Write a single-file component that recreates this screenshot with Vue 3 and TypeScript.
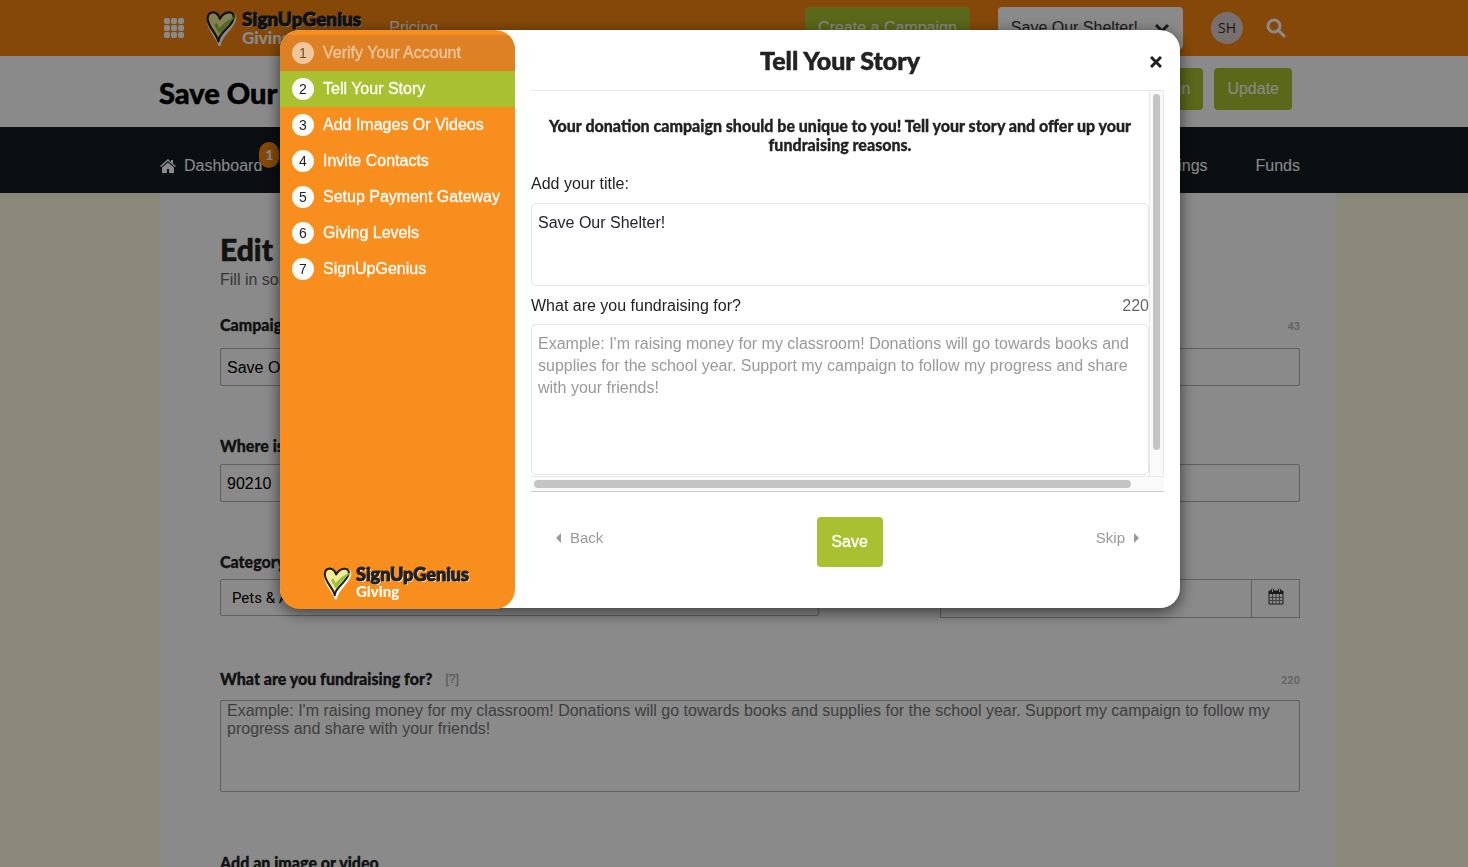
<script setup lang="ts">
import { ref } from 'vue'

interface Step {
  id: number
  label: string
}

const steps: Step[] = [
  { id: 1, label: 'Verify Your Account' },
  { id: 2, label: 'Tell Your Story' },
  { id: 3, label: 'Add Images Or Videos' },
  { id: 4, label: 'Invite Contacts' },
  { id: 5, label: 'Setup Payment Gateway' },
  { id: 6, label: 'Giving Levels' },
  { id: 7, label: 'SignUpGenius' },
]

const current = ref(2)
const title = ref('Save Our Shelter!')
const story = ref('')
const zip = ref('90210')
const date = ref('')
const example =
  "Example: I'm raising money for my classroom! Donations will go towards books and supplies for the school year. Support my campaign to follow my progress and share with your friends!"
</script>

<template>
  <div class="page">
    <svg class="defs" aria-hidden="true">
      <symbol id="heart" viewBox="0 0 32 36">
        <path d="M13 34C12 28 2 19 2 10C2 3 11 2 14 10C18 3 28 2 28 8C28 17 14 24 13 34Z" fill="#fff" stroke="#fff" stroke-width="3" stroke-linejoin="round" />
        <path d="M12 31C11 24 1 16 1.500 8.500C2 1 11 0.500 13.500 9C17 2 27 0.500 27 7C27 16 12 22 12 31Z" fill="#f2ec9a" stroke="#231f20" stroke-width="2.200" stroke-linejoin="round" />
        <path d="M8 15L10.500 13L13 18Q20 9 31 6Q21 13 14.500 23H12.500Z" fill="#9ac03c" />
      </symbol>
    </svg>

    <header class="top">
      <button class="grid-btn" type="button" aria-label="Apps">
        <svg width="20" height="20" viewBox="0 0 20 20">
          <template v-for="r in 3" :key="r">
            <rect v-for="c in 3" :key="c" :x="(c - 1) * 7" :y="(r - 1) * 7" width="6" height="6" rx="2" fill="#fff" />
          </template>
        </svg>
      </button>
      <a class="logo" href="#">
        <svg class="heart"><use href="#heart" /></svg>
        <span class="words"><b>SignUpGenius</b><i>Giving</i></span>
      </a>
      <a class="pricing" href="#">Pricing</a>
      <button class="btn create" type="button">Create a Campaign</button>
      <button class="picker" type="button">
        Save Our Shelter!
        <svg width="16" height="10" viewBox="0 0 16 10"><path d="M2 2L8 8L14 2" fill="none" stroke="#333" stroke-width="3" /></svg>
      </button>
      <span class="avatar">SH</span>
      <button class="search" type="button" aria-label="Search">
        <svg width="20" height="20" viewBox="0 0 20 20"><circle cx="8" cy="8" r="6" fill="none" stroke="#fff" stroke-width="3" /><path d="M12 12L18 18" stroke="#fff" stroke-width="3" stroke-linecap="round" /></svg>
      </button>
    </header>

    <div class="titlebar">
      <h1>Save Our Shelter!</h1>
      <button class="btn" type="button">View Campaign</button>
      <button class="btn" type="button">Update</button>
    </div>

    <nav class="nav">
      <a class="home" href="#">
        <svg width="16" height="14" viewBox="0 0 16 14">
          <path d="M0 7L8 0L11 3V1H13V5L16 7L15 8L8 2L1 8Z" fill="#fff" />
          <path d="M2 8.500L8 3.500L14 8.500V14H9V10H7V14H2Z" fill="#fff" />
        </svg>
        Dashboard<span class="badge">1</span>
      </a>
      <a class="push" href="#">Settings</a>
      <a href="#">Funds</a>
    </nav>

    <main class="panel">
      <h2>Edit Campaign</h2>
      <p class="sub">Fill in some details</p>

      <div class="label-row first"><label for="c-title">Campaign Title</label><small>43</small></div>
      <input id="c-title" v-model="title" class="field" type="text" />

      <div class="label-row where"><label for="c-zip">Where is it?</label></div>
      <input id="c-zip" v-model="zip" class="field" type="text" />

      <div class="split">
        <div>
          <div class="label-row"><label for="c-cat">Category</label></div>
          <select id="c-cat" class="field category"><option>Pets &amp; Animals</option></select>
        </div>
        <div>
          <div class="label-row"><label for="c-date">End Date</label></div>
          <div class="date">
            <input id="c-date" v-model="date" class="field" type="text" />
            <button type="button" aria-label="Open calendar">
              <svg width="16" height="17" viewBox="0 0 16 17">
                <path d="M1 3H15V16H1Z" fill="none" stroke="#333" />
                <path d="M1 3H15V6H1Z" fill="#333" />
                <path d="M1 9.5H15M1 12.5H15M4.5 6V16M8 6V16M11.5 6V16" stroke="#777" />
                <path d="M4.5 2V4M11.5 2V4" stroke="#333" stroke-width="3" stroke-linecap="round" />
                <path d="M4.5 1V4M11.5 1V4" stroke="#fff" />
              </svg>
            </button>
          </div>
        </div>
      </div>

      <div class="label-row what">
        <label for="c-what">What are you fundraising for?</label><a class="help" href="#">[?]</a><small>220</small>
      </div>
      <textarea id="c-what" v-model="story" class="field area" :placeholder="example"></textarea>
      <div class="label-row media"><strong>Add an image or video</strong></div>
    </main>

    <div class="backdrop">
      <section class="modal" role="dialog" aria-modal="true" aria-labelledby="m-title">
        <aside class="steps">
          <ol>
            <li v-for="s in steps" :key="s.id" :class="{ done: s.id < current, active: s.id === current }">
              <button type="button" @click="current = s.id"><span>{{ s.id }}</span>{{ s.label }}</button>
            </li>
          </ol>
          <a class="logo small" href="#">
            <svg class="heart"><use href="#heart" /></svg>
            <span class="words"><b>SignUpGenius</b><i>Giving</i></span>
          </a>
        </aside>

        <div class="body">
          <div class="head">
            <h2 id="m-title">Tell Your Story</h2>
            <button class="close" type="button" aria-label="Close">
              <svg width="12" height="12" viewBox="0 0 12 12"><path d="M1 1L11 11M11 1L1 11" stroke="#222" stroke-width="3" /></svg>
            </button>
          </div>

          <div class="scroller">
            <div class="content">
              <p class="intro">Your donation campaign should be unique to you! Tell your story and offer up your fundraising reasons.</p>
              <label for="m-name">Add your title:</label>
              <textarea id="m-name" v-model="title" class="name"></textarea>
              <div class="row"><label for="m-story">What are you fundraising for?</label><span>220</span></div>
              <textarea id="m-story" v-model="story" class="story" :placeholder="example"></textarea>
            </div>
            <div class="track-v"><div></div></div>
            <div class="track-h"><div></div></div>
          </div>

          <footer>
            <button class="link" type="button">
              <svg width="5" height="10" viewBox="0 0 5 10"><path d="M5 0V10L0 5Z" fill="#999" /></svg>Back
            </button>
            <button class="save" type="button">Save</button>
            <button class="link" type="button">
              Skip<svg width="5" height="10" viewBox="0 0 5 10"><path d="M0 0V10L5 5Z" fill="#999" /></svg>
            </button>
          </footer>
        </div>
      </section>
    </div>
  </div>
</template>

<style>
body {
  margin: 0;
}
</style>

<style scoped>
* {
  box-sizing: border-box;
}
.page {
  height: 100vh;
  overflow: hidden;
  background: #fffbdf;
  font: 16px/20px "Liberation Sans", Arial, sans-serif;
  color: #222;
}
.defs {
  position: absolute;
  width: 0;
  height: 0;
}
button,
input,
textarea,
select {
  font: inherit;
  color: inherit;
}
button {
  border: 0;
  padding: 0;
  background: none;
}
a {
  color: inherit;
  text-decoration: none;
}
h1,
h2,
p,
ol {
  margin: 0;
  padding: 0;
}
h1,
h2 {
  font-family: Lato, sans-serif;
  font-weight: 900;
  -webkit-text-stroke: 0.5px;
}
.top {
  display: flex;
  align-items: center;
  height: 56px;
  padding: 0 182px 0 164px;
  background: #f58610;
  color: #fff;
}
.grid-btn,
.search {
  display: flex;
}
.logo {
  display: flex;
  gap: 3px;
  margin-left: 22px;
}
.heart {
  width: 33px;
  height: 38px;
}
.words {
  display: flex;
  flex-direction: column;
}
.words b {
  font: 900 19px/20px Lato, sans-serif;
  color: #231f20;
  text-shadow: 1px 1px 0 #fff;
  -webkit-text-stroke: 1px;
}
.words i {
  font: 900 17px/18px Lato, sans-serif;
  color: #fff;
}
.pricing {
  margin-left: 28px;
}
.btn {
  height: 42px;
  padding: 0 13px;
  border-radius: 4px;
  background: #a9c030;
  color: #fff;
}
.create {
  margin-left: auto;
}
.picker {
  display: flex;
  align-items: center;
  gap: 16px;
  height: 42px;
  margin: 0 28px;
  padding: 0 13px;
  border-radius: 4px;
  background: #fff;
  color: #333;
}
.avatar {
  width: 32px;
  height: 32px;
  margin-right: 23px;
  border-radius: 50%;
  background: #ddd0cd;
  color: #333;
  font: 14px/32px "Open Sans", sans-serif;
  text-align: center;
}
.titlebar {
  display: flex;
  align-items: center;
  gap: 11px;
  height: 71px;
  padding: 0 176px 6px 159px;
  background: #fff;
}
.titlebar h1 {
  margin-right: auto;
  padding-top: 8px;
  font-size: 29px;
  line-height: 36px;
  color: #000;
}
.nav {
  display: flex;
  align-items: center;
  gap: 48px;
  height: 66px;
  padding: 12px 168px 0 160px;
  background: #141c21;
  color: #fff;
}
.home {
  position: relative;
  display: flex;
  align-items: center;
  gap: 8px;
}
.badge {
  position: absolute;
  top: -14px;
  right: -17px;
  width: 20px;
  border-radius: 10px;
  background: #f58610;
  font: 900 14px/26px Lato, sans-serif;
  text-align: center;
}
.push {
  margin-left: auto;
}
.panel {
  height: 700px;
  margin: 0 132px 0 160px;
  padding: 35px 36px 0 60px;
  background: #fff;
}
.panel h2 {
  font-size: 30px;
  line-height: 42px;
}
.sub {
  padding-bottom: 23px;
  line-height: 20px;
  color: #666;
}
.label-row {
  display: flex;
  align-items: center;
  height: 24px;
  font: 900 16px/24px Lato, sans-serif;
  -webkit-text-stroke: 0.3px;
}
.label-row small {
  margin-left: auto;
  padding-top: 3px;
  font: 700 11px/20px Roboto, sans-serif;
  color: #bbb;
  -webkit-text-stroke: 0;
}
.help {
  margin-left: 13px;
  font: 12px/20px "Liberation Sans", sans-serif;
  color: #aaa;
}
.field {
  display: block;
  width: 100%;
  height: 38px;
  padding: 2px 6px 0;
  border: 1px solid #a9b3b3;
  border-radius: 2px;
  background: #fff;
  color: #000;
}
.first {
  margin-bottom: 11px;
}
.where {
  margin: 48px 0 6px;
}
.split {
  display: grid;
  grid-template-columns: 599px 1fr;
  gap: 121px;
  padding-top: 48px;
}
.category {
  height: 37px;
  margin-top: 5px;
  padding: 0 11px;
  appearance: none;
  font: 15px/20px Roboto, sans-serif;
}
.date {
  display: flex;
  margin-top: 5px;
}
.date .field,
.date button {
  height: 39px;
  border-radius: 0;
}
.date button {
  flex: 0 0 48px;
  border: 1px solid #a9b3b3;
  border-left: 0;
}
.what {
  margin: 49px 0 9px;
}
.area {
  height: 92px;
  padding: 1px 6px;
  line-height: 18px;
  resize: none;
}
.area::placeholder {
  color: #757575;
}
.media {
  margin-top: 59px;
}
.backdrop {
  position: fixed;
  inset: 0;
  display: flex;
  justify-content: center;
  align-items: flex-start;
  padding: 30px 8px 0 0;
  background: rgba(0, 0, 0, 0.46);
}
.modal {
  display: flex;
  width: 900px;
  max-width: 100%;
  border-radius: 20px;
  background: #fff;
  box-shadow: 0 4px 16px rgba(0, 0, 0, 0.6);
}
.steps {
  display: flex;
  flex-direction: column;
  flex: 0 0 235px;
  margin-bottom: -1px;
  padding: 5px 0 8px;
  overflow: hidden;
  border-radius: 20px;
  background: #f88e1d;
  color: #fff;
}
.steps ol {
  list-style: none;
}
.steps li button {
  display: flex;
  align-items: center;
  gap: 9px;
  width: 100%;
  height: 36px;
  padding: 0 12px;
  -webkit-text-stroke: 0.3px;
}
.steps li span {
  width: 22px;
  height: 22px;
  border-radius: 50%;
  background: #fff;
  color: #222;
  font-size: 14px;
  line-height: 22px;
  -webkit-text-stroke: 0;
}
.steps .done {
  background: #de8024;
}
.steps .done button {
  opacity: 0.55;
}
.steps .active {
  background: #a9c030;
}
.small {
  gap: 2px;
  margin: auto 0 0 43px;
  padding-bottom: 1px;
}
.small .heart {
  width: 31px;
  height: 34px;
}
.small .words b {
  font-size: 18px;
  line-height: 17px;
}
.small .words i {
  font-size: 15px;
  line-height: 17px;
}
.body {
  flex: 1;
  min-width: 0;
  padding: 0 16px;
}
.head {
  position: relative;
  height: 60px;
  text-align: center;
}
.head h2 {
  padding-right: 15px;
  font-size: 25px;
  line-height: 60px;
}
.close {
  position: absolute;
  top: 26px;
  right: 2px;
  display: flex;
}
.scroller {
  display: grid;
  grid-template: 385px 15px / 1fr 15px;
  border-top: 1px solid #e6e6e6;
  border-bottom: 1px solid #ccc;
}
.content {
  padding-top: 25px;
}
.intro {
  padding-bottom: 20px;
  font: 900 16px/19px Lato, sans-serif;
  text-align: center;
  -webkit-text-stroke: 0.3px;
}
.content label {
  display: block;
}
.content textarea {
  display: block;
  width: 100%;
  padding: 8px 6px;
  border: 1px solid #e2e2e2;
  border-radius: 5px;
  background: #fff;
  line-height: 22px;
  resize: none;
}
.content .name {
  height: 83px;
  margin: 9px 0 10px;
  color: #223;
}
.row {
  display: flex;
  justify-content: space-between;
  margin-bottom: 8px;
}
.row span {
  color: #666;
}
.content .story {
  height: 151px;
}
.story::placeholder {
  color: #999;
}
.track-v {
  padding: 3px;
  border: 1px solid #e8e8e8;
  border-width: 0 1px;
  background: #fafafa;
}
.track-v div {
  height: 356px;
  border-radius: 4px;
  background: #c4c4c4;
}
.track-h {
  grid-column: 1 / 3;
  padding: 3px;
  border-top: 1px solid #e8e8e8;
  background: #fafafa;
}
.track-h div {
  width: 597px;
  height: 8px;
  border-radius: 4px;
  background: #c4c4c4;
}
footer {
  display: flex;
  justify-content: space-between;
  padding: 25px 25px 41px;
  color: #999;
}
.link {
  display: flex;
  align-items: center;
  gap: 9px;
  height: 42px;
  font-size: 15px;
}
.save {
  width: 66px;
  height: 50px;
  border-radius: 4px;
  background: #a9c030;
  color: #fff;
  -webkit-text-stroke: 0.3px;
}
</style>
